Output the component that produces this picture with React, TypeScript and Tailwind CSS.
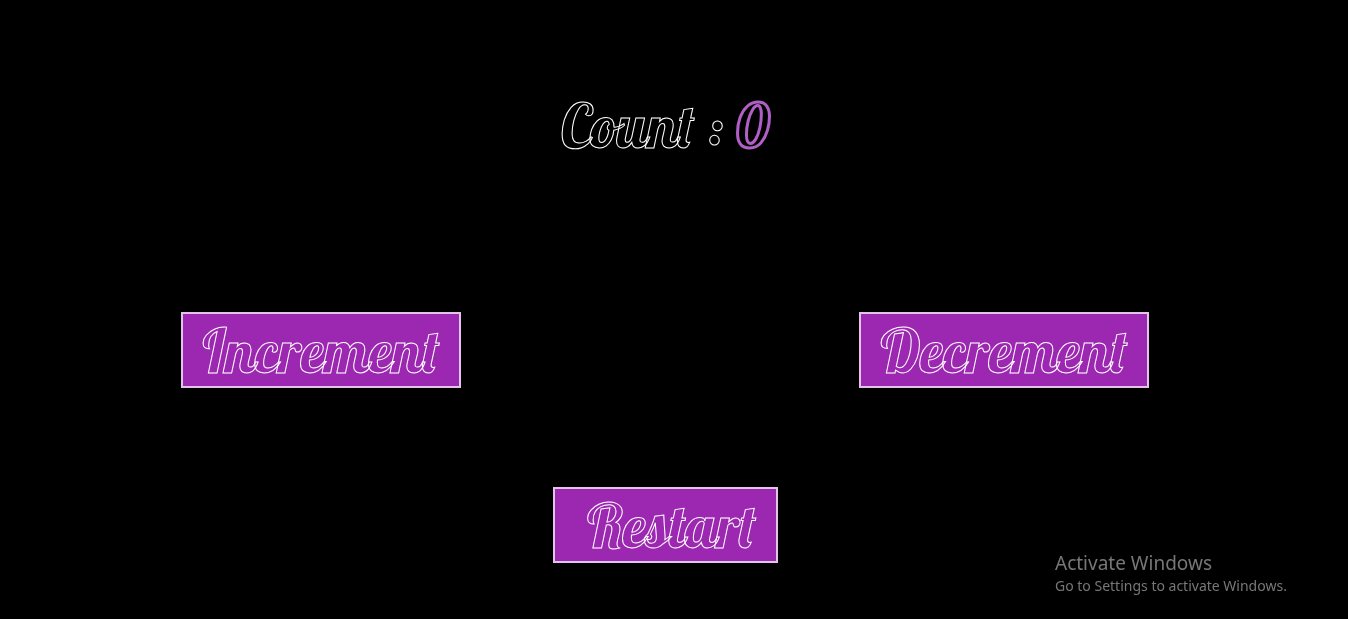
import { useState } from "react";
import type { ReactNode } from "react";

const script = "font-['Lobster','Liberation_Serif',serif] text-[60px] leading-[70px] font-normal whitespace-pre";
const outlined = "text-transparent [-webkit-text-stroke:1px_white]";

function CounterButton({ onClick, width, children }: { onClick: () => void; width: string; children: ReactNode }) {
  return (
    <button
      type="button"
      onClick={onClick}
      className={`${script} ${outlined} ${width} h-[76px] cursor-pointer border-2 border-[#e4c3ea] bg-[#9c27b0] pt-0.5 text-center`}
    >
      {children}
    </button>
  );
}

export default function App() {
  const [count, setCount] = useState(0);

  return (
    <main className="flex min-h-screen flex-col items-center bg-black pt-[91px]">
      <h1 className={`${script} ${outlined} pr-[18px]`}>
        Count : <span className="[-webkit-text-stroke:3px_#b05fc5]">{count}</span>
      </h1>

      <div className="mt-[151px] flex w-full justify-between pr-[199px] pl-[181px]">
        <CounterButton width="w-[280px]" onClick={() => setCount(count + 1)}>
          Increment
        </CounterButton>
        <CounterButton width="w-[290px]" onClick={() => setCount(count - 1)}>
          Decrement
        </CounterButton>
      </div>

      <div className="mt-[99px] pr-[18px]">
        <CounterButton width="w-[225px]" onClick={() => setCount(0)}>
          {" Restart"}
        </CounterButton>
      </div>

      <aside className="fixed right-14 bottom-[22px] w-[237px] font-['Segoe_UI','Noto_Sans',sans-serif] text-[#777777]">
        <p className="text-[19px] leading-6">Activate Windows</p>
        <p className="text-sm leading-[22px]">Go to Settings to activate Windows.</p>
      </aside>
    </main>
  );
}
